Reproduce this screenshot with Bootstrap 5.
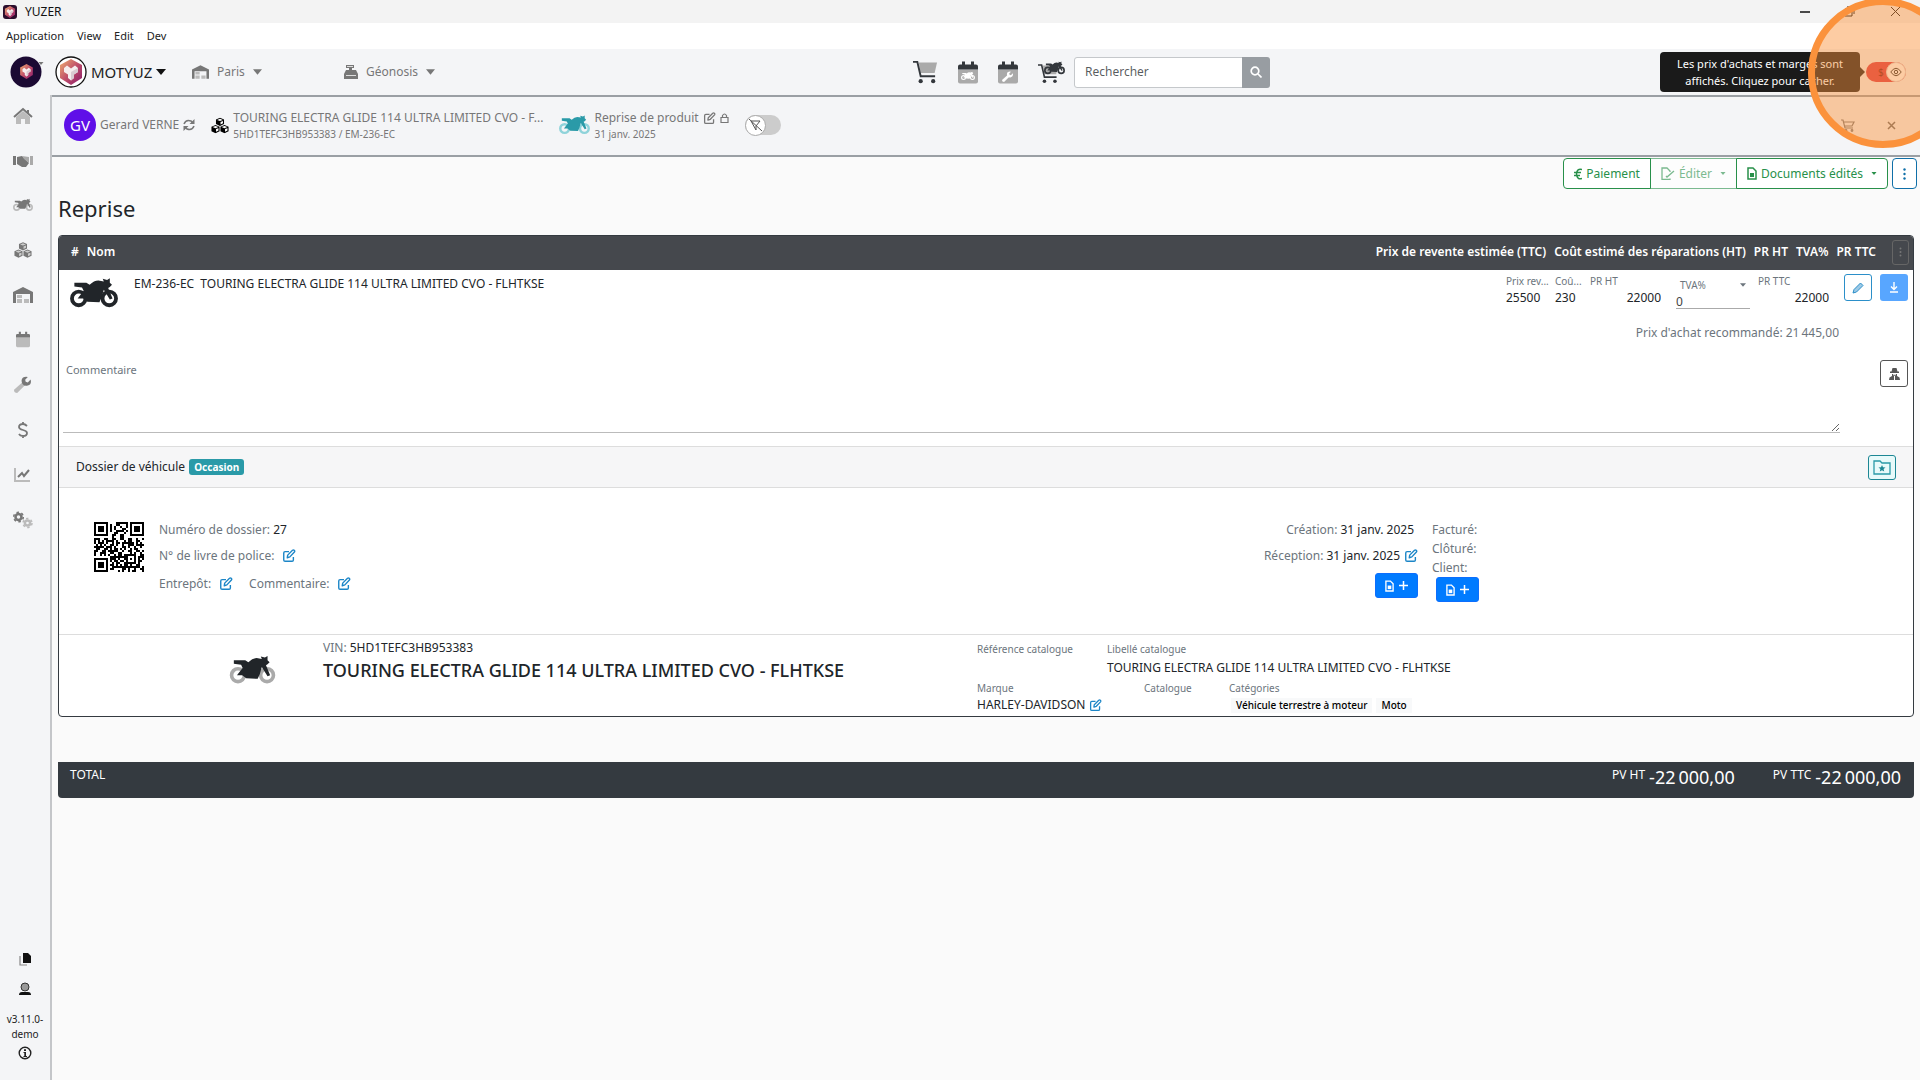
<!DOCTYPE html>
<html lang="fr">
<head>
<meta charset="utf-8">
<meta name="viewport" content="width=device-width, initial-scale=1">
<title>YUZER</title>
<link href="https://cdn.jsdelivr.net/npm/bootstrap@5.3.0/dist/css/bootstrap.min.css" rel="stylesheet">
<style>
:root{--ink:#212529;--soft:#6c757d;--bar:#f4f5f7;--line:#9a9fa4;--edit:#1c86c7;--teal:#2a9aa8}
body{font-family:"Noto Sans","Open Sans",sans-serif;font-size:12px;line-height:20px;color:var(--ink);background:#fafafa;min-height:100vh;display:flex;flex-direction:column;overflow-x:hidden}
svg{flex:none;display:block}
a{color:inherit;text-decoration:none}
.titlebar{height:23px;background:#f3f3f3;padding-left:3px;font-size:12px;color:#111}
.menubar{height:26px;background:#fff;padding-left:6px;gap:13px;font-size:11px;color:#222}
.topbar{height:46px;background:var(--bar);color:#777}
.brandcell{width:51px;position:relative}
.brandcell .tick{position:absolute;right:7px;top:6px}
.brandname{font-size:15px;color:#222}
.nav-brand{width:141px}.nav-site{width:152px}.nav-till{width:569px}
.sidenav{width:52px;background:var(--bar);border-right:2px solid #c4c6c9;color:#777}
.sidenav .rail{padding-top:10px;padding-right:5px}
.sidenav .rail a{height:45px;display:flex;justify-content:center;padding-top:1px}
.sidenav .foot{font-size:10px;line-height:15px;color:#222}
.subbar{height:62px;background:var(--bar);border-top:2px solid var(--line);border-bottom:2px solid var(--line);color:#777;padding:0 0 2px 12px}
.avatar{width:32px;height:32px;border-radius:50%;background:#5f0fe8;color:#fff;font-size:15px;place-items:center}
.sub-small{font-size:10px;line-height:14px}
.line18{line-height:18px}
.switchoff{width:36px;height:20px;border-radius:10px;background:#ccc}
.knob{width:21px;height:21px;border-radius:50%;background:#fff;border:1px solid #aaa;display:grid;place-items:center}
.tools{color:#33373c;gap:20px}
.searchbox{width:196px;height:31px;margin-left:8px}
.searchbox .form-control{font-size:12px;padding:4px 10px;border-color:#c5c8cb;border-radius:3px 0 0 3px}
.searchbox .btn{width:28px;padding:0 7px;background:#989da2;border-radius:0 3px 3px 0}
.toolsbar{padding-top:1px;margin-right:-3px}
.toolsbar .btn{--bs-btn-font-size:12px;--bs-btn-color:#28904a;--bs-btn-border-color:#28904a;--bs-btn-padding-x:10px;--bs-btn-padding-y:4px;--bs-btn-border-radius:4px;background:#fff;height:31px;line-height:20px}
.toolsbar .btn:disabled{--bs-btn-disabled-color:#28904a;--bs-btn-disabled-border-color:#28904a;--bs-btn-disabled-opacity:.6}
.toolsbar .kebab{--bs-btn-color:#0f6fa8;--bs-btn-border-color:#0f6fa8;--bs-btn-padding-x:10px}
.tradein{padding:0 6px}
.tradein h1{font-size:22px;line-height:28px;margin:5px 0 13px;font-weight:400}
.sheet{border:1px solid #343a40;border-radius:4px;background:#fff;overflow:hidden}
.sheet th{background:#45484d;color:#fff;height:34px;padding:0 4px 2px;white-space:nowrap;font-weight:600;font-size:12px}
.sheet .kb{width:17px;height:25px;border:1px solid #666;border-radius:3px;background:none;color:#777;display:grid;place-items:center;padding:0}
.w-fill{width:100%}
.itemrow{padding:4px 5px 0 11px;height:176px}
.itemtop{height:48px}
.fld label,.caption-s{font-size:10px;line-height:14px;color:var(--soft);display:block;white-space:nowrap}
.fld input{border:0;padding:0;background:none;width:100%;height:19px;display:block;color:var(--ink)}
.f-sale{width:39px;margin-right:10px}.f-cost{width:25px;margin-right:10px}.f-price{width:71px;margin-right:15px}
.fld.tva{width:74px;margin-right:8px;padding-top:4px}
.tva select{appearance:none;border:0;border-bottom:1px solid #aaa;background:none;width:100%;height:17px;padding:0;display:block;color:#444}
.sqb{width:28px;height:27px;border-radius:3px;padding:0;display:grid;place-items:center}
.pen{border:1px solid #2b8fc9;margin-right:8px}.dl,.dl:hover{background:#58a6ff}
.ghost{border:1px solid #555}.folder{border:1px solid #1d8794;background:#e8fafa;height:25px}
.reco{padding-right:69px;margin-top:1px}
.cmtrow{margin-left:-7px;margin-top:17px}
.cmt-wrap{width:calc(100% - 68px)}
.cmt-wrap label{display:block;font-size:11px;padding-left:3px}
.cmt{border:0;border-bottom:1px solid #bbb;width:100%;height:53px;display:block;resize:vertical;background:none}
.dossier-head{background:#f6f6f7;border-top:1px solid #ddd;border-bottom:1px solid #ddd;height:42px;padding:0 17px 0 17px}
.occ{font-size:10px;line-height:16px;background:var(--teal);color:#fff;border-radius:3px;padding:0 5px;font-weight:700}
.dossier-body{height:147px;border-bottom:1px solid #ddd;padding:32px 35px 0}
#qr{margin-top:2px}
.dim{color:var(--soft)}
.ed{color:var(--edit)}
.ids{width:1019px;margin-left:15px}
.ids .r3{padding-top:1px}
.r2{height:20px;margin:6px 0 7px}
.dates{gap:14px}
.dates .when{width:240px}
.state{line-height:19px}
.addbtn{--bs-btn-bg:#007bff;--bs-btn-padding-x:9px;--bs-btn-padding-y:0px;width:43px;height:25px;border-radius:3px;display:flex;align-items:center;gap:5px}
.vehicle{height:81px}
.vehicle h2{font-size:18px;line-height:24px;margin:0;white-space:nowrap;font-weight:500}
.vpic{padding:21px 0 0 170px}.vname{margin-left:47px;padding-top:3px;width:654px}.vcat{padding-top:7px}
.crow{height:39px}.crow .wide{line-height:24px}.c130{width:130px}.c167{width:167px}.c85{width:85px}
.chips{padding:3px 0 0 2px}
.chip{font-size:10px;line-height:15px;background:#f8f9fa;color:#000;padding:0 5px;font-weight:500}
.totalbar{margin-top:45px;background:#343a40;color:#fff;height:36px;border-radius:0 0 4px 4px;padding:0 13px 0 12px;line-height:26px;gap:38px}
.amount{font-size:18px;line-height:30px}
.tip{position:absolute;left:1660px;top:52px;width:200px;height:40px;background:#1a1a1a;color:#fff;border-radius:4px;font-size:11px;line-height:17px;padding:3px 4px;text-align:center;z-index:5}
.tip:after{content:"";position:absolute;left:100%;top:15px;border:5px solid transparent;border-left-color:#1a1a1a;border-right:0}
.spot-clip{position:absolute;inset:0 0 auto auto;width:150px;height:150px;overflow:hidden;z-index:9;pointer-events:none}
.spot{position:absolute;left:38px;top:-2px;width:150px;height:150px;border-radius:50%;border:7px solid #fb923c;background:rgba(251,146,60,.47)}
.pricesw{width:40px;height:20px;border-radius:10px;background:#dc3545;color:#711;font-size:10px;margin-right:14px}
.pricesw .knob{width:20px;height:20px;border-color:#ddd}
.stretch{flex:1 1 0;min-width:0}
</style>
<script src="https://cdn.jsdelivr.net/npm/bootstrap@5.3.0/dist/js/bootstrap.bundle.min.js"></script>
</head>
<body class="position-relative">
<svg width="0" height="0" class="position-absolute" aria-hidden="true">
<defs>
<linearGradient id="lg" x1="0" y1="0" x2="1" y2="1"><stop offset="0" stop-color="#f0b070"/><stop offset=".5" stop-color="#c0506a"/><stop offset="1" stop-color="#8a1a6a"/></linearGradient>
<symbol id="gem" viewBox="0 0 24 26"><path d="M12 0 23 6v13l-11 7L1 19V6z" fill="url(#lg)"/><path d="M12 9.500 8 6.500 5 9v4l4 2.500V19l3 2.500 3-2.500v-3.500l4-2.500V9l-3-2.500z" fill="#f6eeee"/><path d="M12 13v8.500l3-2.500v-3.500l4-2.500V9z" fill="#d9cbd2"/></symbol>
<symbol id="moto" viewBox="0 0 44 27"><g fill="none" stroke="var(--w,currentColor)" stroke-width="3.500"><circle cx="8" cy="18.500" r="6.200"/><circle cx="36" cy="18.500" r="6.200"/></g><path fill="currentColor" d="M4 4h11l3 2q4-4 8-4l5 1-1-2.500 4 1 2.500-1.500v4l2 2-2 2-1.500 1 4 9.500-2.500 1-5.500-9-2 7-2 4.500-11-.5-4-3H7l5.500-7-1.500-3-7-1z"/></symbol>
<symbol id="edit" viewBox="0 0 16 16"><path fill="none" stroke="currentColor" stroke-width="1.600" stroke-linejoin="round" d="M8 3H3.500Q2 3 2 4.500v8Q2 14 3.500 14h8q1.500 0 1.500-1.500V9M6 10l.5-3L12 1.500q1-.8 2 0 1 1 .2 2L9 9z"/></symbol>
<symbol id="caret" viewBox="0 0 10 6"><path fill="currentColor" d="M0 0h10L5 6z"/></symbol>
<symbol id="store" viewBox="0 0 20 16"><path fill="currentColor" d="M0 16V5l10-5 10 5v11h-3V7H3v9z"/><path fill="#bbb" d="M4 8h5v3H4zM4 12h5v4H4zM11 12h5v4h-5z"/></symbol>
<symbol id="cube1" viewBox="0 0 10 10"><path d="M5 .5 9.500 2.300v5L5 9.500.5 7.300v-5z" fill="currentColor"/><path d="M1.800 2.800 5 4l3.200-1.200L5 1.600zM5.600 5l2.700-1v2.600L5.600 8z" fill="var(--w,#fff)"/></symbol>
<symbol id="cubes" viewBox="0 0 20 18"><use href="#cube1" x="5" y="0" width="10" height="10"/><use href="#cube1" x="0" y="8" width="10" height="10"/><use href="#cube1" x="10" y="8" width="10" height="10"/></symbol>
<symbol id="cart" viewBox="0 0 26 24"><path fill="var(--w,#aaa)" d="M6 2h19l-2.500 11H8z"/><path fill="none" stroke="currentColor" stroke-width="2" d="M0 1.500h4.500L8 16.500h15M8 13"/><circle cx="8" cy="21.500" r="2.200" fill="currentColor"/><circle cx="21" cy="21.500" r="2.200" fill="currentColor"/></symbol>
<symbol id="cal" viewBox="0 0 20 22"><path fill="var(--w,#aaa)" d="M0 8h20v12q0 2-2 2H2q-2 0-2-2z"/><path fill="currentColor" d="M0 8V5q0-2 2-2h2V0h3v3h6V0h3v3h2q2 0 2 2v3z"/></symbol>
<symbol id="wrench" viewBox="0 0 16 16"><path d="M9 5 0 13q0 3 3 3l8-8z" fill="var(--w,#bbb)"/><path d="M13 1 10.500 3.500l.5 2 2 .5L15.600 3.300Q17 8 13 9q-3 1-5-1.500Q6 4 8.500 1.500 11 0 13 1z" fill="currentColor"/></symbol>
<symbol id="fileplus" viewBox="0 0 10 13"><path fill="none" stroke="currentColor" stroke-width="1.500" d="M1 1h5l3 3v8H1z"/><path fill="currentColor" d="M3 6h4v4H3z"/></symbol>
<symbol id="eye" viewBox="0 0 16 12"><g fill="none" stroke="currentColor" stroke-width="1.300"><path d="M1 6q7-10 14 0-7 10-14 0z"/><circle cx="8" cy="6" r="2.300"/></g></symbol>
</defs></svg>

<header>
<div class="titlebar d-flex align-items-center gap-2">
<svg width="14" height="14"><rect width="14" height="14" rx="3" fill="#2a0d2c"/><use href="#gem" x="1" y="1" width="12" height="12"/></svg><span>YUZER</span>
<svg class="ms-auto me-3" width="112" height="18" fill="none" stroke="#111" stroke-width="1"><path stroke-width="1.500" d="M8 9h10"/><path d="M53 6h7v7h-7zM55 4h7v7M99 4l9 9M108 4l-9 9"/></svg>
</div>
<nav class="menubar d-flex align-items-center" aria-label="Menu"><a href="#">Application</a><a href="#">View</a><a href="#">Edit</a><a href="#">Dev</a></nav>
<div class="topbar d-flex align-items-center">
<div class="brandcell d-flex justify-content-center"><svg width="32" height="32"><circle cx="16" cy="16" r="15.500" fill="#1b0a33"/><use href="#gem" x="9" y="8" width="15" height="15"/></svg><svg class="tick" width="6" height="3"><use href="#caret"/></svg></div>
<div class="nav-brand d-flex align-items-center"><svg class="ms-1" width="32" height="32"><circle cx="16" cy="16" r="15" fill="#fff" stroke="#111" stroke-width="1.300"/><use href="#gem" x="3" y="3" width="26" height="26"/></svg>
<a href="#" class="brandname ms-1 me-1">MOTYUZ</a><svg width="10" height="6" color="#111"><use href="#caret"/></svg></div>
<div class="nav-site d-flex align-items-center gap-2"><svg width="17" height="14"><use href="#store"/></svg><a href="#">Paris</a><svg width="9" height="6"><use href="#caret"/></svg></div>
<div class="nav-till d-flex align-items-center gap-2"><svg width="14" height="14" fill="#777"><path d="M2 0h8v3H8v2h4l2 4v5H0V9l2-4h3V3H2z"/><path d="M2 10h10v1H2zM3 1h6v1H3z" fill="#ddd"/></svg><a href="#">Géonosis</a><svg width="9" height="6"><use href="#caret"/></svg></div>
<div class="tools d-flex align-items-center">
<a href="#" aria-label="Panier"><svg width="25" height="24"><use href="#cart"/></svg></a>
<a href="#" aria-label="Agenda essais"><svg width="20" height="23"><use href="#cal"/><use href="#moto" x="3" y="10" width="14" height="10" color="#fff"/></svg></a>
<a href="#" aria-label="Agenda atelier"><svg width="20" height="23"><use href="#cal"/><use href="#wrench" x="4" y="10" width="11" height="11" color="#fff" style="--w:#fff"/></svg></a>
<a href="#" aria-label="Achat moto"><svg width="28" height="24"><use href="#cart" x="0" y="3" width="21" height="21"/><use href="#moto" x="6" y="1" width="21" height="14"/></svg></a>
</div>
<form class="searchbox input-group flex-nowrap"><input class="form-control" type="text" placeholder="Rechercher" aria-label="Rechercher"><button class="btn" type="button" aria-label="Chercher"><svg width="12" height="12" fill="none" stroke="#fff" stroke-width="1.700"><circle cx="5" cy="5" r="3.800"/><path d="m8 8 3.500 3.500"/></svg></button></form>
<button class="pricesw border-0 d-flex align-items-center justify-content-between p-0 ms-auto" aria-label="Masquer les prix"><span class="ps-2 ms-1">$</span><span class="knob"><svg width="12" height="10" color="#222"><use href="#eye"/></svg></span></button>
</div>
</header>

<div class="d-flex flex-grow-1">
<aside class="sidenav d-flex flex-column flex-shrink-0">
<nav class="rail" aria-label="Modules">
<a href="#" aria-label="Accueil"><svg width="20" height="20" viewBox="0 0 20 20"><path fill="#bbb" d="m10 5 7 6v7h-5v-5H8v5H3v-7z"/><path fill="none" stroke="#777" stroke-width="2" d="m1 11 9-8 9 8M15 4v4"/></svg></a>
<a href="#" aria-label="Clients"><svg width="20" height="20" viewBox="0 0 20 20"><path fill="#777" d="M0 5h3v9H0zM4 6l5-1 4 4 3 3-3 4H9l-5-3z"/><path fill="#aaa" d="m9 5 7 1v6l-5-4zM17 5h3v9h-3z"/></svg></a>
<a href="#" aria-label="Véhicules"><svg width="20" height="20" style="--w:#bbb"><use href="#moto" width="20" height="18"/></svg></a>
<a href="#" aria-label="Stock"><svg width="18" height="18" style="--w:#ccc"><use href="#cubes"/></svg></a>
<a href="#" aria-label="Entrepôts"><svg width="20" height="18"><use href="#store"/></svg></a>
<a href="#" aria-label="Agenda"><svg width="14" height="17" style="--w:#bbb"><use href="#cal"/></svg></a>
<a href="#" aria-label="Atelier"><svg width="17" height="17"><use href="#wrench"/></svg></a>
<a href="#" aria-label="Finances"><svg width="12" height="18" fill="none" stroke="#777" stroke-width="1.800"><path d="M10 5Q8 3 6 3 2 3 2 6q0 2 4 3t4 3q0 3-4 3-3 0-4-2M6 1v2M6 15v2"/></svg></a>
<a href="#" aria-label="Statistiques"><svg width="17" height="17" fill="none" stroke-width="2"><path stroke="#bbb" d="M1 2v13h15"/><path stroke="#777" d="m4 11 4-4 2 3 5-6"/></svg></a>
<a href="#" aria-label="Réglages"><svg width="20" height="18" fill="none" stroke-width="2.500"><g stroke="#777"><circle cx="5.500" cy="6" r="3"/><circle cx="5.500" cy="6" r="4.800" stroke-width="1.500" stroke-dasharray="2.500"/></g><g stroke="#bbb"><circle cx="14.500" cy="12" r="2.600"/><circle cx="14.500" cy="12" r="4.500" stroke-width="1.500" stroke-dasharray="2.400"/></g></svg></a>
</nav>
<div class="foot mt-auto d-flex flex-column align-items-center text-center pb-3 mb-1">
<svg class="mb-3" width="12" height="14"><path d="M1 4v9h7" fill="none" stroke="#888" stroke-width="1.200"/><path d="M4 1h5l3 3v7H4z" fill="#111"/></svg>
<svg class="mb-3" width="12" height="14"><circle cx="6" cy="5" r="4" fill="#999" stroke="#333"/><path d="M0 13q0-3 3-3h6q3 0 3 3z" fill="#111"/></svg>
<span>v3.11.0-<br>demo</span>
<svg class="mt-1" width="14" height="14"><circle cx="7" cy="7" r="5.800" fill="none" stroke="#222" stroke-width="1.400"/><path d="M6 3.200h2v1.800H6zM5.500 6H8v4h1v1H5.500v-1H6.300V7h-.8z" fill="#222"/></svg>
</div>
</aside>

<div class="stretch">
<div class="subbar d-flex align-items-center">
<span class="avatar d-grid flex-shrink-0">GV</span>
<span class="ms-1">Gerard VERNE</span>
<svg class="ms-1" width="12" height="12" fill="none" stroke="#777" stroke-width="1.500"><path d="M1 5q2-5 7-3l2 2M11 7q-2 5-7 3L2 8"/><path fill="#777" stroke="none" d="M11.500 0v5h-5zM.5 12V7h5z"/></svg>
<svg class="ms-3" width="18" height="17" color="#000"><use href="#cubes"/></svg>
<div class="ms-1 line18"><div>TOURING ELECTRA GLIDE 114 ULTRA LIMITED CVO - F...</div><div class="sub-small">5HD1TEFC3HB953383 / EM-236-EC</div></div>
<svg class="ms-3" width="31" height="20" color="#2a9aa8" style="--w:#8fd3da"><use href="#moto"/></svg>
<div class="ms-1 line18"><div class="d-flex align-items-center gap-1"><span>Reprise de produit</span><svg width="13" height="13"><use href="#edit"/></svg><svg width="9" height="10" fill="none" stroke="#777" stroke-width="1.200"><path d="M1 4.500h7v5H1zM2.500 4V2.500Q4.500-.5 6.500 2.500V4"/></svg></div><div class="sub-small">31 janv. 2025</div></div>
<span class="switchoff ms-3"><span class="knob"><svg width="15" height="15" fill="none" stroke="#555"><path d="M3 3h9L8 8v4zM1 1l13 12"/></svg></span></span>
<div class="ms-auto d-flex align-items-center me-4"><a href="#" aria-label="Panier" class="me-4"><svg width="14" height="13" fill="none" stroke="#777" stroke-width="1.200"><path d="M0 1h2l2 8h8M3 3h10l-2 4H4"/><circle cx="5" cy="11.500" r=".8"/><circle cx="11" cy="11.500" r=".8"/></svg></a><button class="btn p-0 border-0 ms-2" aria-label="Fermer"><svg width="9" height="9" stroke="#666" stroke-width="1.500"><path d="m1 1 7 7M8 1 1 8"/></svg></button></div>
</div>

<main class="tradein">
<div class="toolsbar d-flex justify-content-end gap-1">
<div class="btn-group">
<button class="btn d-flex align-items-center gap-1"><svg width="8" height="12" fill="none" stroke="currentColor" stroke-width="1.500"><path d="M8 1.500Q3 0 2.500 6 3 12 8 10.500M0 4.500h7M0 7.500h6"/></svg>Paiement</button>
<button class="btn d-flex align-items-center gap-1" disabled><svg width="14" height="13" fill="none" stroke="currentColor" stroke-width="1.300"><path d="M9 11.500v1H1V1h5l3 3v1M5 9l1 1 7-6"/></svg>Éditer<svg class="ms-1" width="6" height="3"><use href="#caret"/></svg></button>
<button class="btn d-flex align-items-center gap-1"><svg width="10" height="13"><use href="#fileplus"/></svg>Documents édités<svg class="ms-1" width="6" height="3"><use href="#caret"/></svg></button>
</div>
<button class="btn kebab" aria-label="Plus"><svg width="3" height="12" fill="currentColor"><circle cx="1.500" cy="1.500" r="1.200"/><circle cx="1.500" cy="6" r="1.200"/><circle cx="1.500" cy="10.500" r="1.200"/></svg></button>
</div>
<h1>Reprise</h1>
<section class="sheet">
<table class="w-100">
<thead><tr><th class="ps-2"><span class="ps-1">#</span></th><th class="w-fill">Nom</th><th>Prix de revente estimée (TTC)</th><th>Coût estimé des réparations (HT)</th><th>PR HT</th><th>TVA%</th><th>PR TTC</th><th class="ps-2"><button class="kb ms-1" aria-label="Colonnes"><svg width="3" height="10" fill="currentColor"><circle cx="1.500" cy="1.500" r="1"/><circle cx="1.500" cy="5" r="1"/><circle cx="1.500" cy="8.500" r="1"/></svg></button></th></tr></thead>
<tbody><tr><td colspan="8" class="p-0">
<div class="itemrow d-flex flex-column">
<div class="itemtop d-flex align-items-start">
<svg class="mt-1" width="48" height="30"><use href="#moto"/></svg>
<div class="ms-3">EM-236-EC&nbsp; TOURING ELECTRA GLIDE 114 ULTRA LIMITED CVO - FLHTKSE</div>
<div class="ms-auto d-flex align-items-start">
<div class="fld f-sale"><label for="a1">Prix rev...</label><input id="a1" value="25500"></div>
<div class="fld f-cost"><label for="a2">Coû...</label><input id="a2" value="230"></div>
<div class="fld f-price"><label for="a3">PR HT</label><input id="a3" class="text-end" value="22000"></div>
<div class="fld tva"><label for="a4" class="d-flex justify-content-between align-items-center px-1">TVA%<svg width="6" height="4"><use href="#caret"/></svg></label><select id="a4"><option>0</option></select></div>
<div class="fld f-price"><label for="a5">PR TTC</label><input id="a5" class="text-end" value="22000"></div>
<button class="btn sqb pen" aria-label="Modifier"><svg width="12" height="12" fill="#9cc9e6" stroke="#2b8fc9"><path d="m1 11 1-3.500L8.500 1 11 3.500 4.500 10z"/></svg></button>
<button class="btn sqb dl" aria-label="Télécharger"><svg width="10" height="11" fill="none" stroke="#fff" stroke-width="1.400"><path d="M5 0v7M2 4.500l3 3 3-3M1 10h8"/></svg></button>
</div></div>
<div class="dim text-end reco">Prix d'achat recommandé: 21&#8239;445,00</div>
<div class="d-flex align-items-start cmtrow"><div class="cmt-wrap"><label class="dim" for="cm">Commentaire</label><textarea id="cm" class="cmt"></textarea></div>
<button class="btn sqb ghost ms-auto" aria-label="Confidentiel"><svg width="11" height="12" fill="#555"><path d="M3.500 0h4l1 3.500H10v1.500H1V3.500h1.500zM3 6h5v2l2.500 1.500.5 2.500H0l.5-2.500L3 8z"/><path d="M5 8h1v4H5zM4 6.300h3v1H4z" fill="#fff"/></svg></button></div>
</div>
</td></tr></tbody></table>

<div class="dossier-head d-flex align-items-center gap-1"><span>Dossier de véhicule</span><span class="occ">Occasion</span>
<button class="btn sqb folder ms-auto" aria-label="Dossier"><svg width="18" height="15" fill="none" stroke="#2a9aa8" stroke-width="1.300"><path d="M1 1h6l2 2h8v11H1z"/><path fill="#1d8794" stroke="none" d="m9 5 1 2.300 2.500.2-1.900 1.600.6 2.500L9 10.300l-2.200 1.300.6-2.500-1.900-1.600L8 7.300z"/></svg></button></div>

<div class="dossier-body d-flex align-items-start">
<svg id="qr" width="50" height="50" viewBox="0 0 25 25" shape-rendering="crispEdges" role="img" aria-label="QR code"></svg>
<div class="ids"><div><span class="dim">Numéro de dossier:</span> 27</div>
<div class="r2 d-flex align-items-center gap-2"><span class="dim">N° de livre de police:</span><a href="#" class="ed" aria-label="Modifier"><svg width="14" height="14"><use href="#edit"/></svg></a></div>
<div class="r3 d-flex align-items-center gap-2"><span class="dim">Entrepôt:</span><a href="#" class="ed" aria-label="Modifier"><svg width="14" height="14"><use href="#edit"/></svg></a><span class="dim ms-2">Commentaire:</span><a href="#" class="ed" aria-label="Modifier"><svg width="14" height="14"><use href="#edit"/></svg></a></div></div>
<div class="dates d-flex align-items-start">
<div class="when d-flex flex-column align-items-end"><div class="pe-1"><span class="dim">Création:</span> 31 janv. 2025</div><div class="r2 d-flex align-items-center gap-1"><span><span class="dim">Réception:</span> 31 janv. 2025</span><a href="#" class="ed" aria-label="Modifier"><svg width="14" height="14"><use href="#edit"/></svg></a></div><button class="btn btn-primary addbtn" aria-label="Ajouter"><svg width="9" height="12"><use href="#fileplus"/></svg><svg width="9" height="9" stroke="#fff" stroke-width="1.500"><path d="M4.500 0v9M0 4.500h9"/></svg></button></div>
<div class="dim state"><div>Facturé:</div><div>Clôturé:</div><div>Client:</div><button class="btn btn-primary addbtn ms-1" aria-label="Ajouter"><svg width="9" height="12"><use href="#fileplus"/></svg><svg width="9" height="9" stroke="#fff" stroke-width="1.500"><path d="M4.500 0v9M0 4.500h9"/></svg></button></div>
</div></div>

<div class="vehicle d-flex">
<div class="vpic"><svg width="47" height="28" style="--w:#aaa"><use href="#moto"/></svg></div>
<div class="vname"><div><span class="dim">VIN:</span> 5HD1TEFC3HB953383</div><h2>TOURING ELECTRA GLIDE 114 ULTRA LIMITED CVO - FLHTKSE</h2></div>
<div class="vcat"><div class="d-flex crow"><div class="c130"><span class="caption-s">Référence catalogue</span></div><div><span class="caption-s">Libellé catalogue</span><div class="wide">TOURING ELECTRA GLIDE 114 ULTRA LIMITED CVO - FLHTKSE</div></div></div>
<div class="d-flex"><div class="c167"><span class="caption-s">Marque</span><div class="d-flex align-items-center gap-1">HARLEY-DAVIDSON<a href="#" class="ed" aria-label="Modifier"><svg width="13" height="13"><use href="#edit"/></svg></a></div></div><div class="c85"><span class="caption-s">Catalogue</span></div><div><span class="caption-s">Catégories</span><div class="chips d-flex gap-1"><span class="chip">Véhicule terrestre à moteur</span><span class="chip">Moto</span></div></div></div></div>
</div>
</section>
<section class="totalbar d-flex align-items-start"><span class="me-auto">TOTAL</span><span class="d-flex gap-1">PV HT <span class="amount">-22&#8239;000,00</span></span><span class="d-flex gap-1">PV TTC <span class="amount">-22&#8239;000,00</span></span></section>
</main>
</div></div>

<div class="tip" role="tooltip">Les prix d'achats et marges sont<br>affichés. Cliquez pour cacher.</div>
<div class="spot-clip"><div class="spot"></div></div>
<script>
const n=25,fin=(x,y,cx,cy)=>{const d=Math.max(Math.abs(x-cx),Math.abs(y-cy));return d>4?null:d==4?0:d==2?0:1};
let seed=27,d="";
for(let y=0;y<n;y++)for(let x=0;x<n;x++){
 seed=(seed*1103515245+12345)%2147483648;
 let v=fin(x,y,3,3)??fin(x,y,21,3)??fin(x,y,3,21);
 if(v===null){const a=Math.max(Math.abs(x-18),Math.abs(y-18));v=a<3?(a!=1):((seed>>12)&1)}
 if(v)d+=`M${x} ${y}h1v1h-1z`;
}
document.getElementById("qr").innerHTML=`<path d="${d}"/>`;
</script>
</body>
</html>
